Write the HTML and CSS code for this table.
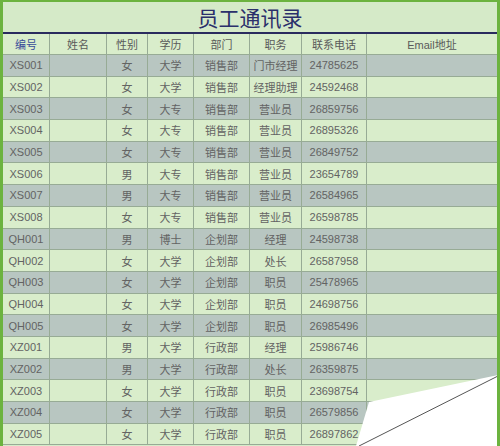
FILE: index.html
```html
<!DOCTYPE html>
<html lang="zh">
<head>
<meta charset="utf-8">
<link rel="stylesheet" href="styles.css">
</head>
<body>
<div class="sheet">
  <div class="title">员工通讯录</div>
  <div class="row head">
    <div class="c first">编号</div><div class="c">姓名</div><div class="c">性别</div><div class="c">学历</div><div class="c">部门</div><div class="c">职务</div><div class="c">联系电话</div><div class="c">Email地址</div>
  </div>
  <div class="row g"><div class="c">XS001</div><div class="c"></div><div class="c">女</div><div class="c">大学</div><div class="c">销售部</div><div class="c">门市经理</div><div class="c">24785625</div><div class="c"></div></div>
  <div class="row"><div class="c">XS002</div><div class="c"></div><div class="c">女</div><div class="c">大学</div><div class="c">销售部</div><div class="c">经理助理</div><div class="c">24592468</div><div class="c"></div></div>
  <div class="row g"><div class="c">XS003</div><div class="c"></div><div class="c">女</div><div class="c">大专</div><div class="c">销售部</div><div class="c">营业员</div><div class="c">26859756</div><div class="c"></div></div>
  <div class="row"><div class="c">XS004</div><div class="c"></div><div class="c">女</div><div class="c">大专</div><div class="c">销售部</div><div class="c">营业员</div><div class="c">26895326</div><div class="c"></div></div>
  <div class="row g"><div class="c">XS005</div><div class="c"></div><div class="c">女</div><div class="c">大专</div><div class="c">销售部</div><div class="c">营业员</div><div class="c">26849752</div><div class="c"></div></div>
  <div class="row"><div class="c">XS006</div><div class="c"></div><div class="c">男</div><div class="c">大专</div><div class="c">销售部</div><div class="c">营业员</div><div class="c">23654789</div><div class="c"></div></div>
  <div class="row g"><div class="c">XS007</div><div class="c"></div><div class="c">男</div><div class="c">大专</div><div class="c">销售部</div><div class="c">营业员</div><div class="c">26584965</div><div class="c"></div></div>
  <div class="row"><div class="c">XS008</div><div class="c"></div><div class="c">女</div><div class="c">大专</div><div class="c">销售部</div><div class="c">营业员</div><div class="c">26598785</div><div class="c"></div></div>
  <div class="row g"><div class="c">QH001</div><div class="c"></div><div class="c">男</div><div class="c">博士</div><div class="c">企划部</div><div class="c">经理</div><div class="c">24598738</div><div class="c"></div></div>
  <div class="row"><div class="c">QH002</div><div class="c"></div><div class="c">女</div><div class="c">大学</div><div class="c">企划部</div><div class="c">处长</div><div class="c">26587958</div><div class="c"></div></div>
  <div class="row g"><div class="c">QH003</div><div class="c"></div><div class="c">女</div><div class="c">大学</div><div class="c">企划部</div><div class="c">职员</div><div class="c">25478965</div><div class="c"></div></div>
  <div class="row"><div class="c">QH004</div><div class="c"></div><div class="c">女</div><div class="c">大学</div><div class="c">企划部</div><div class="c">职员</div><div class="c">24698756</div><div class="c"></div></div>
  <div class="row g"><div class="c">QH005</div><div class="c"></div><div class="c">女</div><div class="c">大学</div><div class="c">企划部</div><div class="c">职员</div><div class="c">26985496</div><div class="c"></div></div>
  <div class="row"><div class="c">XZ001</div><div class="c"></div><div class="c">男</div><div class="c">大学</div><div class="c">行政部</div><div class="c">经理</div><div class="c">25986746</div><div class="c"></div></div>
  <div class="row g"><div class="c">XZ002</div><div class="c"></div><div class="c">男</div><div class="c">大学</div><div class="c">行政部</div><div class="c">处长</div><div class="c">26359875</div><div class="c"></div></div>
  <div class="row"><div class="c">XZ003</div><div class="c"></div><div class="c">女</div><div class="c">大学</div><div class="c">行政部</div><div class="c">职员</div><div class="c">23698754</div><div class="c"></div></div>
  <div class="row g"><div class="c">XZ004</div><div class="c"></div><div class="c">女</div><div class="c">大学</div><div class="c">行政部</div><div class="c">职员</div><div class="c">26579856</div><div class="c"></div></div>
  <div class="row"><div class="c">XZ005</div><div class="c"></div><div class="c">女</div><div class="c">大学</div><div class="c">行政部</div><div class="c">职员</div><div class="c">26897862</div><div class="c"></div></div>

  <svg class="curl" width="500" height="446" viewBox="0 0 500 446">
    <polygon points="369,402 498,375 500,375 500,446 356,446" fill="#ffffff"/>
    <line x1="359" y1="446" x2="498" y2="376" stroke="#555" stroke-width="1"/>
  </svg>
</div>
</body>
</html>
```
FILE: styles.css
```css
html, body {
  margin: 0;
  padding: 0;
  background: #ffffff;
}
.sheet {
  position: relative;
  width: 500px;
  height: 446px;
  box-sizing: border-box;
  overflow: hidden;
  border-top: 2px solid #6cb33f;
  border-left: 3px solid #6cb33f;
  border-right: 3px solid #6cb33f;
  background: #d6ebc9;
  font-family: "Liberation Sans", "Noto Sans CJK SC", sans-serif;
  font-size: 11px;
  color: #636363;
}
.title {
  height: 30px;
  border-bottom: 2px solid #2a2b5e;
  display: flex;
  align-items: center;
  justify-content: center;
  font-family: "Noto Sans CJK SC", sans-serif;
  font-size: 21px;
  color: #2b2f6b;
  background: #d5eac8;
}
.row {
  display: grid;
  grid-template-columns: 47px 57px 41px 46px 56px 52px 65px 1fr;
  height: 21.7px;
  background: #d9edcb;
}
.row.g {
  background: #b8c6c1;
}
.row.head {
  height: 21px;
  background: #d9edcb;
}
.c {
  display: flex;
  align-items: center;
  justify-content: center;
  border-right: 1px solid #97ab95;
  border-bottom: 1px solid #97ab95;
  white-space: nowrap;
  overflow: hidden;
}
.c:last-child {
  border-right: none;
}
.head .c {
  color: #5a5a5a;
}
.head .c.first {
  color: #3a4d9a;
}
.curl {
  position: absolute;
  left: -3px;
  top: -2px;
}
```
